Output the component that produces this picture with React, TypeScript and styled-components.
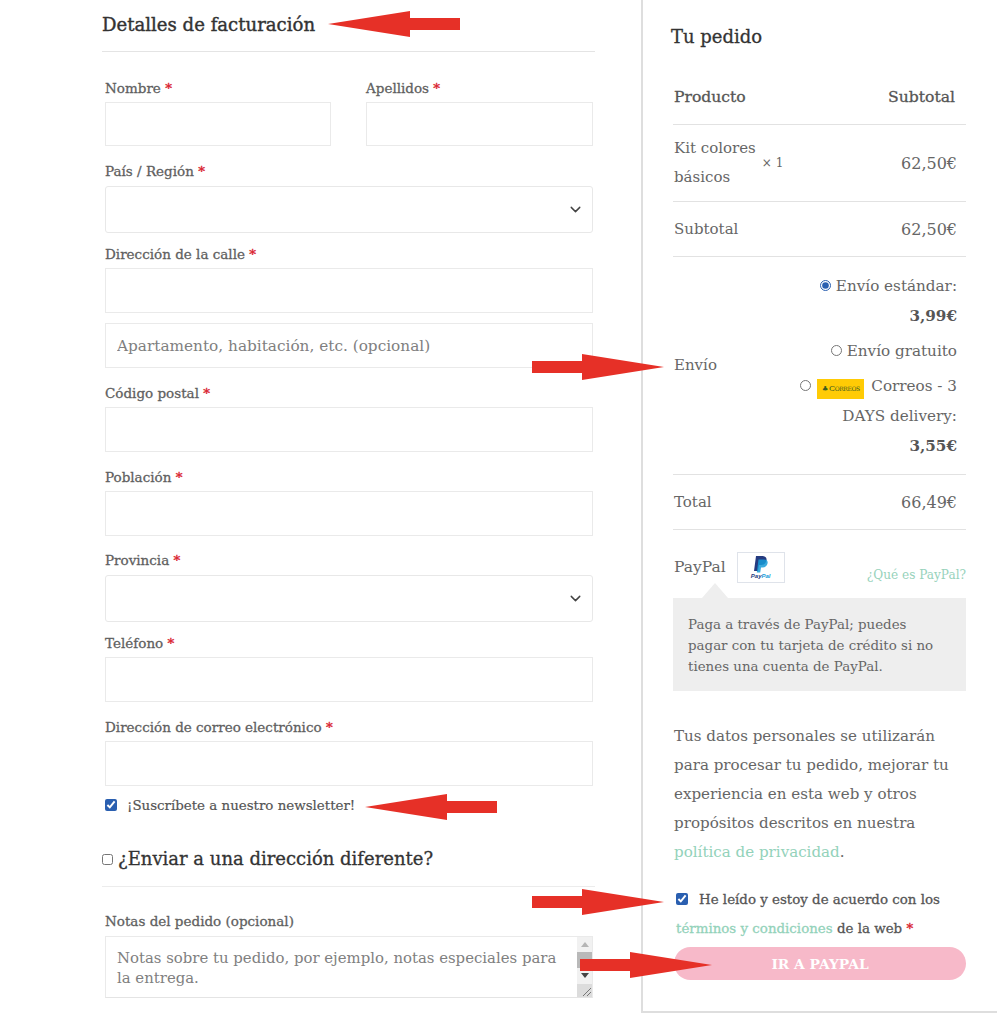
import styled, { createGlobalStyle } from 'styled-components'
import { ChevronDown } from 'lucide-react'

const serif = `"DejaVu Serif", "Liberation Serif", serif`

const Global = createGlobalStyle`
  html, body {
    margin: 0;
    background: #fff;
  }
`

export default function App () {
  return (
    <>
      <Global />
      <Page>
        <Billing>
          <BillingTitle>Detalles de facturación</BillingTitle>

          <NameRow>
            <Field>
              <Label>Nombre <Req>*</Req></Label>
              <Input />
            </Field>
            <Field>
              <Label>Apellidos <Req>*</Req></Label>
              <Input />
            </Field>
          </NameRow>

          <Field $after={11}>
            <Label $gap={5}>País / Región <Req>*</Req></Label>
            <Select><ChevronDown size={17} strokeWidth={2} /></Select>
          </Field>

          <Field>
            <Label>Dirección de la calle <Req>*</Req></Label>
            <Input $h={45} />
            <Input $h={45} $top={10} placeholder="Apartamento, habitación, etc. (opcional)" />
          </Field>

          <Field>
            <Label>Código postal <Req>*</Req></Label>
            <Input $h={45} />
          </Field>

          <Field $after={14}>
            <Label>Población <Req>*</Req></Label>
            <Input $h={45} />
          </Field>

          <Field $after={11}>
            <Label $gap={5}>Provincia <Req>*</Req></Label>
            <Select><ChevronDown size={17} strokeWidth={2} /></Select>
          </Field>

          <Field>
            <Label>Teléfono <Req>*</Req></Label>
            <Input $h={45} />
          </Field>

          <Field $after={9}>
            <Label>Dirección de correo electrónico <Req>*</Req></Label>
            <Input $h={45} />
          </Field>

          <Newsletter>
            <Check type="checkbox" defaultChecked />
            ¡Suscríbete a nuestro newsletter!
          </Newsletter>

          <ShipTitle>
            <SmallCheck type="checkbox" />
            ¿Enviar a una dirección diferente?
          </ShipTitle>

          <Field $after={0}>
            <Label $gap={5}>Notas del pedido (opcional)</Label>
            <NotesBox>
              <Notes placeholder="Notas sobre tu pedido, por ejemplo, notas especiales para la entrega." />
              <Scrollbar>
                <ScrollArrow viewBox="0 0 8 5"><path d="M4 0 8 5H0z" fill="#b5b5b5" /></ScrollArrow>
                <ScrollThumb />
                <ScrollArrow viewBox="0 0 8 5"><path d="M0 0h8L4 5z" fill="#444" /></ScrollArrow>
                <ResizeGrip>
                  <svg width="10" height="10" viewBox="0 0 10 10">
                    <path d="M1 9 9 1M5 9l4-4" stroke="#777" strokeWidth="1" />
                  </svg>
                </ResizeGrip>
              </Scrollbar>
            </NotesBox>
          </Field>
        </Billing>

        <Order>
          <OrderTitle>Tu pedido</OrderTitle>

          <Row $h={57}>
            <HeadCell>Producto</HeadCell>
            <HeadCell $end>Subtotal</HeadCell>
          </Row>
          <Row $h={77}>
            <ProductName>
              <span>Kit colores<br />básicos</span>
              <Qty>× 1</Qty>
            </ProductName>
            <Price>62,50€</Price>
          </Row>
          <Row $h={55}>
            <span>Subtotal</span>
            <Price>62,50€</Price>
          </Row>
          <Row $h={218}>
            <span>Envío</span>
            <Shipping>
              <ShipOption>
                <Radio type="radio" name="ship" defaultChecked />
                Envío estándar:<br /><strong>3,99€</strong>
              </ShipOption>
              <ShipOption>
                <Radio type="radio" name="ship" />
                Envío gratuito
              </ShipOption>
              <ShipOption>
                <Radio type="radio" name="ship" $gap={6} />
                <Correos><CorreosCrest>♣</CorreosCrest>Correos</Correos>
                Correos - 3<br />DAYS delivery:<br /><strong>3,55€</strong>
              </ShipOption>
            </Shipping>
          </Row>
          <Row $h={55}>
            <span>Total</span>
            <Price>66,49€</Price>
          </Row>

          <PayRow>
            <PayName>PayPal</PayName>
            <PayLogo>
              <svg width="16" height="17" viewBox="0 0 16 17">
                <path d="M3 0h6c3.4 0 5 1.700 4.500 4.300C13 7.300 11 9 8 9H6l-1 6H1z" fill="#253b80" />
                <path d="M5.500 3.500h5.500c2.800 0 4 1.500 3.600 3.800C14.100 10 12.300 11.500 9.600 11.500H8L7.200 16.500H3.800z" fill="#179bd7" opacity="0.85" />
              </svg>
              <PayWord>Pay<i>Pal</i></PayWord>
            </PayLogo>
            <PayLink>¿Qué es PayPal?</PayLink>
          </PayRow>
          <PayNote>
            Paga a través de PayPal; puedes pagar con tu tarjeta de crédito si no tienes una cuenta de PayPal.
          </PayNote>

          <Privacy>
            Tus datos personales se utilizarán para procesar tu pedido, mejorar tu experiencia en esta web y otros propósitos descritos en nuestra <GreenLink>política de privacidad</GreenLink>.
          </Privacy>

          <Terms>
            <TermsCheck type="checkbox" defaultChecked />
            He leído y estoy de acuerdo con los<br />
            <GreenLink>términos y condiciones</GreenLink> de la web <Req>*</Req>
          </Terms>

          <PayButton>IR A PAYPAL</PayButton>
        </Order>

        <Arrow $x={328} $y={11} $flip />
        <Arrow $x={365} $y={794} $flip />
        <Arrow $x={532} $y={354} />
        <Arrow $x={532} $y={889} />
        <Arrow $x={580} $y={952} />
      </Page>
    </>
  )
}

function Arrow (props: { $x: number, $y: number, $flip?: boolean }) {
  return (
    <ArrowSvg {...props} width="132" height="26" viewBox="0 0 132 26">
      <path d="M0 7h50V0l82 13-82 13v-7H0z" fill="#e63027" />
    </ArrowSvg>
  )
}

const Page = styled.div`
  position: relative;
  display: flex;
  width: 997px;
  height: 1024px;
  overflow: hidden;
  background: #fff;
  font-family: ${serif};
  color: #666;
`

const ArrowSvg = styled.svg<{ $x: number, $y: number, $flip?: boolean }>`
  position: absolute;
  left: ${p => p.$x}px;
  top: ${p => p.$y}px;
  transform: ${p => (p.$flip ? 'scaleX(-1)' : 'none')};
`

const Billing = styled.section`
  width: 493px;
  margin-left: 102px;
`

const BillingTitle = styled.h3`
  margin: 0 0 26px;
  height: 51px;
  line-height: 50px;
  border-bottom: 1px solid #e4e4e4;
  font-size: 18.1px;
  font-weight: 400;
  color: #333;
  -webkit-text-stroke: 0.4px #333;
`

const NameRow = styled.div`
  display: grid;
  grid-template-columns: 231px 232px;
  column-gap: 30px;
`

const Field = styled.div<{ $after?: number }>`
  margin: 0 2px ${p => p.$after ?? 15}px 3px;
`

const Label = styled.label<{ $gap?: number }>`
  display: block;
  height: 20px;
  margin-bottom: ${p => p.$gap ?? 4}px;
  line-height: 20px;
  font-size: 13.5px;
  color: #5f5f5f;
  -webkit-text-stroke: 0.3px #5f5f5f;
`

const Req = styled.span`
  color: #d9202c;
  -webkit-text-stroke: 0.3px #d9202c;
`

const Input = styled.input<{ $h?: number, $top?: number }>`
  display: block;
  box-sizing: border-box;
  width: 100%;
  height: ${p => p.$h ?? 44}px;
  margin-top: ${p => p.$top ?? 0}px;
  padding: 0 11px;
  border: 1px solid #eaeaea;
  background: #fff;
  font-family: ${serif};
  font-size: 15.3px;
  outline: none;

  &::placeholder {
    color: #808080;
    opacity: 1;
  }
`

const Select = styled.div`
  display: flex;
  align-items: center;
  justify-content: flex-end;
  box-sizing: border-box;
  height: 47px;
  padding-right: 8px;
  border: 1px solid #e8e8e8;
  border-radius: 3px;
  color: #444;
`

const Newsletter = styled.label`
  display: flex;
  align-items: center;
  height: 20px;
  margin-left: 3px;
  font-size: 13.4px;
  color: #555;
  -webkit-text-stroke: 0.2px #555;
`

const Check = styled.input`
  width: 12px;
  height: 12px;
  margin: 0 10px 0 0;
  accent-color: #2a5fb0;
`

const SmallCheck = styled.input`
  width: 11px;
  height: 11px;
  margin: 0 5px 0 0;
`

const ShipTitle = styled.h3`
  display: flex;
  align-items: center;
  box-sizing: border-box;
  height: 43px;
  margin: 29px 0 24px;
  padding-bottom: 12px;
  border-bottom: 1px solid #ececec;
  font-size: 18px;
  font-weight: 400;
  color: #333;
  -webkit-text-stroke: 0.3px #333;
  line-height: 28px;
`

const NotesBox = styled.div`
  display: flex;
  box-sizing: border-box;
  height: 62px;
  border: 1px solid #eaeaea;
  border-bottom-color: #e4e4e4;
`

const Notes = styled.textarea`
  flex: 1;
  box-sizing: border-box;
  padding: 11px 11px 0;
  border: 0;
  resize: none;
  outline: none;
  overflow: hidden;
  font-family: ${serif};
  font-size: 14.9px;
  line-height: 20px;

  &::placeholder {
    color: #808080;
    opacity: 1;
  }
`

const Scrollbar = styled.div`
  display: flex;
  flex-direction: column;
  align-items: center;
  width: 15px;
  background: #f1f1f1;
`

const ScrollArrow = styled.svg`
  width: 8px;
  height: 5px;
  margin: 5px 0;
`

const ScrollThumb = styled.div`
  align-self: stretch;
  height: 16px;
  background: #b9b9b9;
`

const ResizeGrip = styled.div`
  display: flex;
  align-items: flex-end;
  justify-content: flex-end;
  align-self: stretch;
  flex: 1;
  margin-top: 1px;
  background: #dcdcdc;
`

const Order = styled.aside`
  box-sizing: border-box;
  width: 356px;
  height: 1013px;
  margin-left: 46px;
  padding: 0 31px 0 30px;
  border-left: 2px solid #dedede;
  border-bottom: 2px solid #dedede;
  font-size: 15px;
`

const OrderTitle = styled.h3`
  height: 68px;
  margin: 0 0 0 -2px;
  padding-top: 23px;
  box-sizing: border-box;
  line-height: 28px;
  font-size: 18px;
  font-weight: 400;
  color: #333;
  -webkit-text-stroke: 0.3px #333;
`

const Row = styled.div<{ $h: number }>`
  display: flex;
  align-items: center;
  justify-content: space-between;
  box-sizing: border-box;
  height: ${p => p.$h}px;
  padding: 0 9px 0 1px;
  border-bottom: 1px solid #e2e2e2;
  line-height: 29px;
`

const HeadCell = styled.span<{ $end?: boolean }>`
  margin: 2px ${p => (p.$end ? 2 : 0)}px 0 0;
  font-size: 15.6px;
  color: #555;
  -webkit-text-stroke: 0.3px #555;
`

const ProductName = styled.div`
  display: flex;
  align-items: center;
  gap: 6px;
`

const Qty = styled.span`
  font-size: 12px;
`

const Price = styled.span`
  font-size: 16px;
`

const Shipping = styled.div`
  display: flex;
  flex-direction: column;
  gap: 5px;
  width: 200px;
  font-size: 15.2px;
  text-align: right;

  strong {
    color: #555;
  }
`

const ShipOption = styled.div`
  line-height: 30px;
`

const Radio = styled.input<{ $gap?: number }>`
  width: 11px;
  height: 11px;
  margin: 0 ${p => p.$gap ?? 5}px 0 0;
  accent-color: #2a5fb0;
`

const Correos = styled.span`
  display: inline-flex;
  align-items: center;
  justify-content: center;
  box-sizing: border-box;
  width: 47px;
  height: 20px;
  margin: 4px 7px 0 0;
  background: #ffcb05;
  vertical-align: middle;
  font-size: 8px;
  line-height: 20px;
  letter-spacing: -0.4px;
  color: #3a5a20;
  font-variant: small-caps;
`

const CorreosCrest = styled.span`
  font-size: 7px;
  margin-right: 1px;
`

const PayRow = styled.div`
  display: flex;
  align-items: flex-start;
  height: 68px;
  padding: 22px 0 0 1px;
  box-sizing: border-box;
`

const PayName = styled.span`
  font-size: 15.5px;
  line-height: 31px;
`

const PayLogo = styled.div`
  display: flex;
  flex-direction: column;
  align-items: center;
  justify-content: center;
  box-sizing: border-box;
  width: 48px;
  height: 31px;
  margin-left: 11px;
  border: 1px solid #dfe3ea;
`

const PayWord = styled.span`
  font-family: "Liberation Sans", sans-serif;
  font-size: 6px;
  line-height: 7px;
  font-weight: 700;
  font-style: italic;
  color: #253b80;

  i {
    color: #179bd7;
  }
`

const PayLink = styled.a`
  margin-left: auto;
  padding-top: 14px;
  font-size: 12.1px;
  line-height: 18px;
  color: #97d2bb;
`

const PayNote = styled.div`
  position: relative;
  box-sizing: border-box;
  height: 93px;
  padding: 16px 22px 0 15px;
  background: #eee;
  font-size: 13.4px;
  line-height: 21px;
  color: #666;

  &::before {
    content: '';
    position: absolute;
    left: 29px;
    top: -15px;
    border: 13px solid transparent;
    border-top: 0;
    border-bottom: 15px solid #eee;
  }
`

const Privacy = styled.p`
  margin: 31px 0 18px;
  padding-left: 1px;
  font-size: 15.1px;
  line-height: 29px;
`

const GreenLink = styled.a`
  color: #93d2ba;
`

const Terms = styled.div`
  margin-left: 3px;
  font-size: 13.4px;
  line-height: 29px;
  color: #555;
  -webkit-text-stroke: 0.3px #555;

  ${GreenLink} {
    -webkit-text-stroke: 0.3px #93d2ba;
  }
`

const TermsCheck = styled.input`
  width: 12px;
  height: 12px;
  margin: 0 11px 0 0;
  accent-color: #2a5fb0;
  vertical-align: -1px;
`

const PayButton = styled.button`
  display: block;
  width: 292px;
  height: 33px;
  margin: 4px 0 0 1px;
  padding: 0;
  border: 0;
  border-radius: 17px;
  background: #f7b9c9;
  font-family: ${serif};
  font-size: 13.8px;
  font-weight: 700;
  color: #fff;
`
